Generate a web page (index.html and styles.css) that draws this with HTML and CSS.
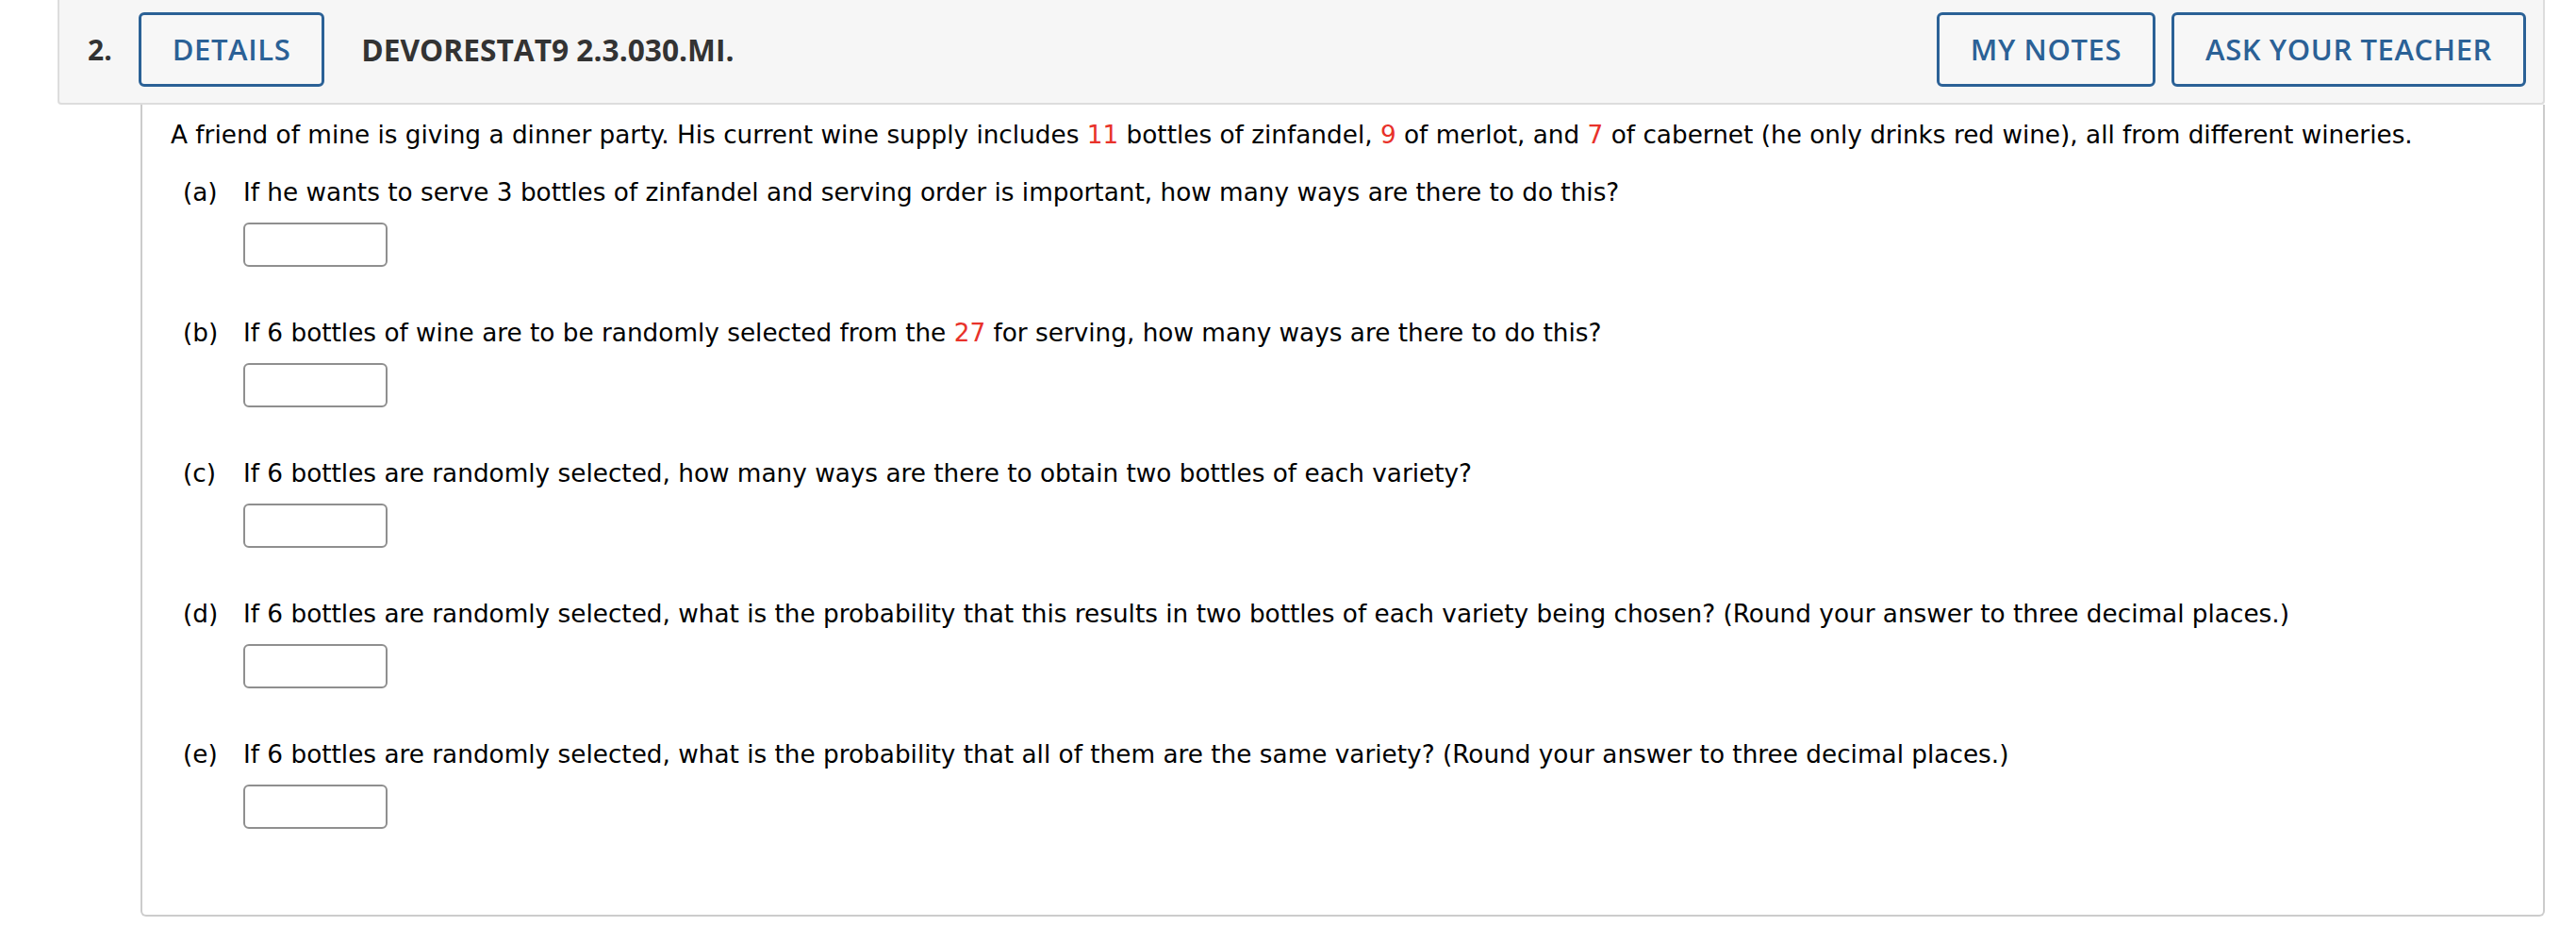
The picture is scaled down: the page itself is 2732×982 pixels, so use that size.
FILE: index.html
```html
<!DOCTYPE html>
<html lang="en">
<head>
<meta charset="utf-8">
<title>Question 2</title>
<link rel="stylesheet" href="styles.css">
</head>
<body>
<div class="question">
  <div class="q-header">
    <span class="q-num">2.</span>
    <button class="btn">DETAILS</button>
    <span class="q-title">DEVORESTAT9 2.3.030.MI.</span>
    <span class="spacer"></span>
    <button class="btn">MY NOTES</button>
    <button class="btn">ASK YOUR TEACHER</button>
  </div>
  <div class="q-body">
    <p class="intro">A friend of mine is giving a dinner party. His current wine supply includes <span class="red">11</span> bottles of zinfandel, <span class="red">9</span> of merlot, and <span class="red">7</span> of cabernet (he only drinks red wine), all from different wineries.</p>
    <div class="part">
      <div class="part-line"><span class="part-label">(a)</span><span>If he wants to serve 3 bottles of zinfandel and serving order is important, how many ways are there to do this?</span></div>
      <input class="answer" type="text">
    </div>
    <div class="part">
      <div class="part-line"><span class="part-label">(b)</span><span>If 6 bottles of wine are to be randomly selected from the <span class="red">27</span> for serving, how many ways are there to do this?</span></div>
      <input class="answer" type="text">
    </div>
    <div class="part">
      <div class="part-line"><span class="part-label">(c)</span><span>If 6 bottles are randomly selected, how many ways are there to obtain two bottles of each variety?</span></div>
      <input class="answer" type="text">
    </div>
    <div class="part">
      <div class="part-line"><span class="part-label">(d)</span><span>If 6 bottles are randomly selected, what is the probability that this results in two bottles of each variety being chosen? (Round your answer to three decimal places.)</span></div>
      <input class="answer" type="text">
    </div>
    <div class="part">
      <div class="part-line"><span class="part-label">(e)</span><span>If 6 bottles are randomly selected, what is the probability that all of them are the same variety? (Round your answer to three decimal places.)</span></div>
      <input class="answer" type="text">
    </div>
  </div>
</div>
</body>
</html>
```
FILE: styles.css
```css
html, body {
  margin: 0;
  padding: 0;
  background: #ffffff;
}

.question {
  margin: 0 33px 0 61px;
}

.q-header {
  display: flex;
  align-items: center;
  background: #f6f6f6;
  border: 2px solid #dddddd;
  border-top: none;
  border-radius: 0 0 4px 4px;
  padding: 13px 18px 17px 30px;
  font-family: "Open Sans", "Liberation Sans", sans-serif;
}

.q-num {
  font-size: 30px;
  font-weight: 700;
  color: #333333;
  margin-right: 28px;
}

.btn {
  height: 79px;
  box-sizing: border-box;
  padding: 0 33px;
  border: 3px solid #2b6196;
  border-radius: 6px;
  background: #f7f7f7;
  color: #2b6196;
  font-family: "Open Sans", "Liberation Sans", sans-serif;
  font-size: 31px;
  font-weight: 600;
  letter-spacing: 0.6px;
  line-height: 1;
  display: inline-flex;
  align-items: center;
  justify-content: center;
}

.btn + .btn {
  margin-left: 17px;
}

.q-title {
  margin-left: 39px;
  font-size: 31.7px;
  font-weight: 700;
  color: #333333;
}

.spacer {
  flex: 1;
}

.q-body {
  margin-left: 88px;
  border: 2px solid #cccccc;
  border-top: none;
  border-radius: 0 0 6px 6px;
  padding: 17px 30px 91px 30px;
  font-family: "DejaVu Sans", Verdana, sans-serif;
  font-size: 26.3px;
  line-height: 30px;
  color: #000000;
}

.intro {
  margin: 0 0 31px 0;
}

.red {
  color: #e8322a;
}

.part {
  display: flex;
  flex-direction: column;
  align-items: flex-start;
  margin-left: 13px;
}

.part + .part {
  margin-top: 55px;
}

.part-line {
  display: flex;
}

.part-label {
  width: 64px;
  flex: none;
}

.answer {
  margin: 17px 0 0 64px;
  width: 153px;
  height: 47px;
  box-sizing: border-box;
  border: 2px solid #8f8f8f;
  border-radius: 6px;
  background: #ffffff;
  padding: 0 8px;
  font-family: "DejaVu Sans", Verdana, sans-serif;
  font-size: 21px;
}
```
